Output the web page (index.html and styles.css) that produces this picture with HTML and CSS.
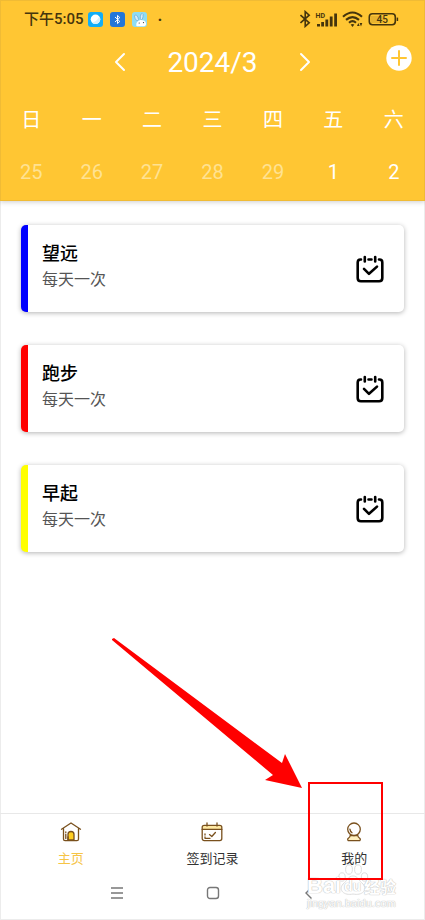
FILE: index.html
```html
<!DOCTYPE html>
<html lang="zh-CN">
<head>
<meta charset="utf-8">
<meta name="viewport" content="width=device-width, initial-scale=1">
<title>打卡</title>
<link rel="stylesheet" href="styles.css">
</head>
<body>
<svg class="defs" aria-hidden="true">
  <symbol id="check-in" viewBox="0 0 28 28">
    <g fill="none" stroke="#000" stroke-width="2.6" stroke-linecap="round" stroke-linejoin="round">
      <path d="M5 4.5H4.5Q1.7 4.5 1.7 7.5V23Q1.7 26.2 4.9 26.2H23.1Q26.3 26.2 26.3 23V7.5Q26.3 4.5 23.5 4.5H23M12.5 4.5H15.5M8.8 2V6.4M19.2 2V6.4"/>
      <path d="M8 13.8L13 18.8L21 11.6"/>
    </g>
  </symbol>
</svg>
<div class="screen">
  <header class="top">
    <div class="status">
      <div class="status-left">
        <span class="clock">下午5:05</span>
        <svg class="app" viewBox="0 0 15 15"><rect width="15" height="15" rx="3" fill="#12adf8"/><circle cx="7.5" cy="7.3" r="4.8" fill="#fff"/><path d="M3.8 10.4Q8 10.5 11.4 4.5Q13.5 8 10.4 11Q7 13.5 3.8 10.4Z" fill="#d7effb"/></svg>
        <svg class="app" viewBox="0 0 15 15"><rect width="15" height="15" rx="3" fill="#2276d8"/><path d="M5 5L9.8 9.4L7.5 11.6V3.4L9.8 5.6L5 10" fill="none" stroke="#fff" stroke-width="1"/></svg>
        <svg class="app" viewBox="0 0 15 15"><rect width="15" height="15" rx="3" fill="#8edcf4"/><ellipse cx="4.5" cy="5.8" rx="1.5" ry="3.1" transform="rotate(-25 4.5 5.8)" fill="#d8effc" stroke="#629fd0" stroke-width=".6"/><ellipse cx="9.7" cy="4.6" rx="1.3" ry="3.3" transform="rotate(8 9.7 4.6)" fill="#d8effc" stroke="#629fd0" stroke-width=".6"/><path d="M4.3 13.8Q3.8 9 8.5 8.1Q13.4 8 14 11.3Q14.3 14 12 14.2H5Z" fill="#fff"/><circle cx="7.2" cy="11" r=".6" fill="#333"/><circle cx="11.5" cy="10.6" r=".6" fill="#333"/></svg>
        <span class="dot">·</span>
      </div>
      <svg class="status-right" viewBox="0 0 100 18" role="img" aria-label="蓝牙、信号、无线网络、电量 45">
        <g fill="none" stroke="#45350d" stroke-width="1.6">
          <path d="M.5 5L9.2 12.8L5.2 16.4V1.6L9.2 5.2L.5 13"/>
          <path d="M43 6.8Q52.5 -1.8 62 6.8M46 9.9Q52.5 4.2 59 9.9M49 12.8Q52.5 9.6 56 12.8" stroke-width="2.1"/>
          <rect x="69.3" y="3.8" width="26" height="11" rx="3.2"/>
          <path d="M97.4 7.6V11" stroke-width="1.5"/>
        </g>
        <g fill="#45350d">
          <rect x="17" y="14" width="3" height="2.5"/><rect x="21.2" y="12" width="2.8" height="4.5"/><rect x="25.4" y="9.5" width="2.8" height="7"/><rect x="29.8" y="6.5" width="2.8" height="10"/><rect x="34.2" y="3.5" width="2.8" height="13"/>
          <path d="M50.6 14.6Q52.5 13.2 54.4 14.6L52.5 17Z"/><path d="M58.3 12.9L59.7 16.1H57ZM61 16.4L59.6 13.1H62.3Z"/>
        </g>
        <rect x="71" y="6" width="12" height="7" fill="#e8b42f"/>
        <text x="15.5" y="7.8" class="hd">HD</text>
        <text x="82.3" y="13" class="charge" text-anchor="middle">45</text>
      </svg>
    </div>
    <div class="month">
      <button class="icon-button" aria-label="上个月"><svg class="chevron" viewBox="0 0 12 20"><path d="M10 2L2 10L10 18"/></svg></button>
      <h1>2024/3</h1>
      <button class="icon-button" aria-label="下个月"><svg class="chevron" viewBox="0 0 12 20"><path d="M2 2L10 10L2 18"/></svg></button>
      <button class="icon-button add" aria-label="添加"><svg viewBox="0 0 26 26"><circle cx="13" cy="13" r="12.7" fill="#fff"/><path d="M13 6V20M6 13H20" fill="none" stroke="#ffc633" stroke-width="2" stroke-linecap="round"/></svg></button>
    </div>
    <table class="week">
      <thead><tr><th>日</th><th>一</th><th>二</th><th>三</th><th>四</th><th>五</th><th>六</th></tr></thead>
      <tbody><tr><td class="past">25</td><td class="past">26</td><td class="past">27</td><td class="past">28</td><td class="past">29</td><td>1</td><td>2</td></tr></tbody>
    </table>
  </header>

  <main class="habits">
    <article class="card blue">
      <div><h2>望远</h2><p>每天一次</p></div>
      <button class="icon-button" aria-label="望远签到"><svg class="check"><use href="#check-in"/></svg></button>
    </article>
    <article class="card red">
      <div><h2>跑步</h2><p>每天一次</p></div>
      <button class="icon-button" aria-label="跑步签到"><svg class="check"><use href="#check-in"/></svg></button>
    </article>
    <article class="card yellow">
      <div><h2>早起</h2><p>每天一次</p></div>
      <button class="icon-button" aria-label="早起签到"><svg class="check"><use href="#check-in"/></svg></button>
    </article>
  </main>

  <nav class="tabs">
    <a href="#home" class="active">
      <svg viewBox="0 0 22 22"><g fill="none" stroke="#79501d" stroke-width="1.3" stroke-linecap="round" stroke-linejoin="round"><path d="M1.5 8.2L11 2L20.5 8.2M3.5 7.4V18.3Q3.5 19.6 5 19.6H17Q18.5 19.6 18.5 18.3V7.4"/><path d="M8 19V13.6Q8 10.5 11 10.5Q14 10.5 14 13.6V19Z" fill="#ffce21"/><path d="M5.8 11V11.4M5.8 13.2V17.5M8 19V16"/></g></svg>
      <span>主页</span>
    </a>
    <a href="#records">
      <svg viewBox="0 0 22 22"><path d="M1.6 5H20.4V8.2H1.6Z" fill="#ffe9a3"/><g fill="none" stroke="#79501d" stroke-width="1.3" stroke-linecap="round" stroke-linejoin="round"><rect x="1.2" y="4.3" width="19.6" height="15.3" rx="2"/><path d="M1.2 8.4H20.8M6 2V5M16 2V5M8.5 13.6L10.8 15.5L14.4 11.5M4 13V14M4 16V17.3H9"/></g></svg>
      <span>签到记录</span>
    </a>
    <a href="#mine">
      <svg viewBox="0 0 22 22"><path d="M7 15H15L17 19H5Z" fill="#fff0be"/><g fill="none" stroke="#79501d" stroke-width="1.3" stroke-linecap="round" stroke-linejoin="round"><circle cx="11" cy="8.3" r="6.3"/><path d="M7.2 14.5H14.8Q15 16.3 16.4 17Q18 18.1 16.8 19.6H5.2Q4 18.1 5.6 17Q7 16.3 7.2 14.5ZM6.9 8.1Q7.2 10.5 9 11.7"/></g></svg>
      <span>我的</span>
    </a>
  </nav>

  <footer class="system">
    <button class="icon-button" aria-label="最近任务"><svg viewBox="0 0 14 14"><path d="M1 2H13M1 7H13M1 12H13"/></svg></button>
    <button class="icon-button" aria-label="主屏幕"><svg viewBox="0 0 14 14"><rect x="1.5" y="1.5" width="11" height="11" rx="2.5"/></svg></button>
    <button class="icon-button" aria-label="返回"><svg viewBox="0 0 14 14"><path d="M9.5 1.5L4 7L9.5 12.5"/></svg></button>
  </footer>

  <svg class="arrow" viewBox="0 0 190 150" aria-hidden="true"><path d="M0 0L2 -1L170 124L173 115L190 149L153 141L161 136L0 1Z" fill="#f00"/></svg>
  <div class="watermark">
    <svg class="paw" viewBox="0 0 30 32" aria-hidden="true">
      <g fill="#fff" stroke="#dedede" stroke-width="1">
        <ellipse cx="4" cy="13" rx="3.2" ry="4.2"/><ellipse cx="11" cy="5.5" rx="3.4" ry="4.7"/><ellipse cx="20" cy="5.5" rx="3.4" ry="4.7"/><ellipse cx="26.5" cy="13" rx="3.2" ry="4.2"/>
        <path d="M15 12C10 12 9 17 5 20C0 26 6 32 15 30C24 32 30 26 25 20C21 17 20 12 15 12Z"/>
      </g>
    </svg>
    <div class="wm-brand"><span class="wm-bai">Bai</span><span class="wm-du">du</span><span class="wm-cn">经验</span></div>
    <div class="wm-url">jingyan.baidu.com</div>
  </div>
  <div class="highlight"></div>
</div>
</body>
</html>
```
FILE: styles.css
```css
* { box-sizing: border-box; }

body {
  margin: 0;
  background: #fff;
  color: #000;
  font-family: Roboto, "Noto Sans CJK SC", sans-serif;
}

h1, h2, p { margin: 0; }
svg { display: block; }
.defs { position: absolute; width: 0; height: 0; }

.screen {
  position: relative;
  display: flex;
  flex-direction: column;
  min-height: 100vh;
  overflow: hidden;
  box-shadow: inset 0 0 0 1px #ececec;
}

.icon-button {
  display: grid;
  place-items: center;
  padding: 0;
  border: 0;
  background: none;
}

.top {
  padding-bottom: 5px;
  background: #ffc633;
  color: #fff;
  border: 1px solid #f0bb35;
  box-shadow: 0 1px 5px rgba(0, 0, 0, .2);
}

.status {
  display: flex;
  align-items: center;
  justify-content: space-between;
  height: 36px;
  padding: 0 24px 0 23px;
  color: #45350d;
}
.status-left { display: flex; align-items: center; gap: 7px; }
.clock { font-size: 15px; font-weight: 500; line-height: 20px; margin-right: -3px; }
.app { width: 15px; height: 15px; }
.dot { font-size: 16px; font-weight: 700; margin-left: 4px; }
.status-right { width: 100px; height: 18px; }
.hd { font-size: 7px; font-weight: 700; }
.charge { font-size: 10px; font-weight: 500; }
.status-right text { fill: #45350d; }

.month {
  position: relative;
  display: flex;
  align-items: center;
  justify-content: center;
  gap: 41px;
  height: 50px;
}
.month h1 { font-size: 28px; font-weight: 400; line-height: 32px; padding-top: 2px; }
.chevron { width: 12px; height: 20px; }
.chevron path {
  fill: none;
  stroke: #fff;
  stroke-width: 2;
  stroke-linecap: round;
  stroke-linejoin: round;
}
.add { position: absolute; top: 8px; right: 12px; }
.add svg { width: 26px; height: 26px; }

.week {
  width: 100%;
  table-layout: fixed;
  border-collapse: collapse;
  text-align: center;
  font-size: 20px;
}
.week th, .week td { padding: 0; font-weight: 400; }
.week th { height: 62px; }
.week td { height: 46px; }
.week .past { color: #ffe292; }

.habits {
  flex: 1;
  display: flex;
  flex-direction: column;
  gap: 33px;
  padding: 24px 21px;
}

.card {
  display: flex;
  align-items: center;
  justify-content: space-between;
  min-height: 87px;
  padding: 15px 20px 15px 14px;
  border-left: 7px solid;
  border-radius: 5px;
  background: #fff;
  box-shadow: 0 1px 5px rgba(0, 0, 0, .3);
}
.card.blue { border-left-color: #00f; }
.card.red { border-left-color: #f00; }
.card.yellow { border-left-color: #ff0; }
.card h2 { font-size: 18px; font-weight: 500; line-height: 26px; }
.card p { padding-bottom: 3px; color: #555; font-size: 16px; line-height: 26px; }
.check { width: 28px; height: 28px; }

.tabs {
  display: grid;
  grid-template-columns: repeat(3, 1fr);
  height: 58px;
  border-top: 1px solid #e8e8e8;
}
.tabs a {
  display: flex;
  flex-direction: column;
  align-items: center;
  gap: 6px;
  padding-top: 7px;
  color: #333;
  font-size: 13px;
  line-height: 20px;
  text-decoration: none;
}
.tabs a.active { color: #f6c445; }
.tabs svg { width: 22px; height: 22px; }

.system {
  display: flex;
  justify-content: space-between;
  align-items: center;
  height: 49px;
  padding: 0 109px 5px 110px;
}
.system svg {
  width: 14px;
  height: 14px;
  fill: none;
  stroke: #777;
  stroke-width: 1.4;
}

.arrow {
  position: absolute;
  right: 123px;
  bottom: 131px;
  width: 190px;
  height: 150px;
  overflow: visible;
}
.highlight {
  position: absolute;
  right: 42px;
  bottom: 40px;
  width: 75px;
  height: 98px;
  border: 2px solid #f00;
}

.watermark {
  position: absolute;
  right: 18px;
  bottom: 10px;
  width: 100px;
  color: #fff;
  font-family: "Liberation Sans", "Noto Sans CJK SC", sans-serif;
  text-shadow: 0 0 1px #bbb, 0 0 1px #bbb;
}
.paw {
  position: absolute;
  left: 31px;
  top: -12px;
  width: 30px;
  height: 32px;
  overflow: visible;
}
.wm-brand {
  position: relative;
  display: flex;
  align-items: center;
  height: 20px;
  font-weight: 700;
}
.wm-bai { width: 37px; font-size: 22px; }
.wm-du { width: 20px; font-size: 14px; }
.wm-cn { font-size: 16px; }
.wm-url { font-size: 11px; line-height: 14px; }
```
